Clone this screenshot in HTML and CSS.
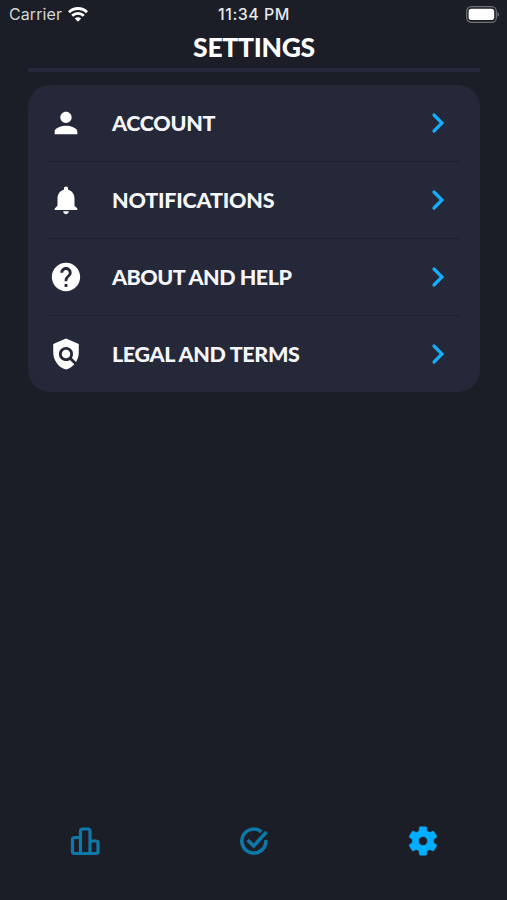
FILE: index.html
```html
<!DOCTYPE html>
<html lang="en">
<head>
    <meta charset="UTF-8">
    <meta name="viewport" content="width=device-width, initial-scale=1.0">
    <title>Settings</title>
    <link rel="stylesheet" href="styles.css">
</head>
<body>
    <div class="screen">
        <!-- Status bar -->
        <div class="status-bar">
            <div class="carrier">
                <span>Carrier</span>
                <svg width="20" height="15" viewBox="0 0 20 15" fill="none" stroke="#fff" stroke-width="2.8">
                    <path d="M1 5.2a12.8 12.8 0 0 1 18 0M4.2 8.8a8.2 8.2 0 0 1 11.6 0"/>
                    <path d="M10 14.8L6.8 11.6a4.5 4.5 0 0 1 6.4 0z" fill="#fff" stroke="none"/>
                </svg>
            </div>
            <div class="clock">11:34 PM</div>
            <div class="battery">
                <svg width="33" height="17" viewBox="0 0 33 17">
                    <rect x=".7" y=".7" width="29.6" height="15.6" rx="4.6" fill="none" stroke="#6f7177" stroke-width="1.2"/>
                    <rect x="2.6" y="2.7" width="25.6" height="11.4" rx="2.8" fill="#fff"/>
                    <path d="M31.5 6v5q1.5-.8 1.5-2.5T31.5 6z" fill="#6f7177"/>
                </svg>
            </div>
        </div>

        <header>
            <h1>SETTINGS</h1>
        </header>

        <main class="card">
            <a class="row">
                <svg class="icon" viewBox="0 0 24 24"><path d="M12 12c2.21 0 4-1.79 4-4s-1.79-4-4-4-4 1.79-4 4 1.79 4 4 4zm0 2c-2.67 0-8 1.34-8 4v2h16v-2c0-2.66-5.33-4-8-4z"/></svg>
                <span class="label account">ACCOUNT</span>
                <svg class="chevron" viewBox="0 0 14 22"><path d="M3 3l8 8-8 8"/></svg>
            </a>
            <a class="row">
                <svg class="icon" viewBox="0 0 24 24"><path d="M12 22c1.1 0 2-.9 2-2h-4c0 1.1.89 2 2 2zm6-6v-5c0-3.07-1.64-5.64-4.5-6.32V4c0-.83-.67-1.5-1.5-1.5s-1.5.67-1.5 1.5v.68C7.63 5.36 6 7.92 6 11v5l-2 2v1h16v-1l-2-2z"/></svg>
                <span class="label notifications">NOTIFICATIONS</span>
                <svg class="chevron" viewBox="0 0 14 22"><path d="M3 3l8 8-8 8"/></svg>
            </a>
            <a class="row">
                <svg class="icon" viewBox="0 0 24 24"><path d="M12 2C6.48 2 2 6.48 2 12s4.48 10 10 10 10-4.48 10-10S17.52 2 12 2zm1 17h-2v-2h2v2zm2.07-7.75l-.9.92C13.45 12.9 13 13.5 13 15h-2v-.5c0-1.1.45-2.1 1.17-2.83l1.24-1.26c.37-.36.59-.86.59-1.41 0-1.1-.9-2-2-2s-2 .9-2 2H8c0-2.21 1.79-4 4-4s4 1.79 4 4c0 .88-.36 1.68-.93 2.25z"/></svg>
                <span class="label about">ABOUT AND HELP</span>
                <svg class="chevron" viewBox="0 0 14 22"><path d="M3 3l8 8-8 8"/></svg>
            </a>
            <a class="row">
                <svg class="icon" viewBox="0 0 24 24"><path d="M21 5l-9-4-9 4v6c0 5.55 3.84 10.74 9 12 2.3-.56 4.33-1.9 5.88-3.71l-3.12-3.12c-1.94 1.29-4.58 1.07-6.29-.64-1.95-1.95-1.95-5.12 0-7.07 1.95-1.95 5.12-1.95 7.07 0 1.71 1.71 1.92 4.35.64 6.29l2.9 2.9C20.29 15.69 21 13.38 21 11V5z"/><circle cx="12" cy="12" r="3"/></svg>
                <span class="label legal">LEGAL AND TERMS</span>
                <svg class="chevron" viewBox="0 0 14 22"><path d="M3 3l8 8-8 8"/></svg>
            </a>
        </main>

        <!-- Bottom tabs -->
        <nav class="tabs">
            <a class="tab">
                <svg viewBox="0 0 34 34" fill="none" stroke="currentColor" stroke-width="3.2" stroke-linejoin="round">
                    <path d="M12.5 12.5h-6q-2 0-2 2v12q0 2 2 2H28q2 0 2-2V18q0-2-2-2h-6M12.5 28.500V6q0-2 2-2H20q2 0 2 2v22.500"/>
                </svg>
            </a>
            <a class="tab">
                <svg viewBox="0 0 34 34" fill="none" stroke="currentColor" stroke-width="3.5">
                    <path d="M24.500 6.800A12 12 0 1 0 28.800 15"/>
                    <path d="M10.500 15l6.200 6L29.500 7"/>
                </svg>
            </a>
            <a class="tab active">
                <svg viewBox="0 0 24 24" fill="currentColor" stroke="currentColor" stroke-width=".4"><path d="M19.5 12c0-.34-.03-.66-.07-.98l2.11-1.65a.5.5 0 0 0 .12-.64l-2-3.46a.5.5 0 0 0-.61-.22l-2.49 1a7.3 7.3 0 0 0-1.69-.98l-.38-2.65A.49.49 0 0 0 14 2h-4a.49.49 0 0 0-.49.42l-.38 2.65c-.61.25-1.17.59-1.69.98l-2.49-1a.5.5 0 0 0-.61.22l-2 3.46a.5.5 0 0 0 .12.64l2.11 1.65a7.9 7.9 0 0 0 0 1.96l-2.11 1.65a.5.5 0 0 0-.12.64l2 3.46c.12.22.39.3.61.22l2.49-1c.52.4 1.08.73 1.69.98l.38 2.65c.03.24.24.42.49.42h4c.25 0 .46-.18.49-.42l.38-2.65c.61-.25 1.17-.59 1.69-.98l2.49 1c.23.09.49 0 .61-.22l2-3.46a.5.5 0 0 0-.12-.64l-2.11-1.65c.04-.32.07-.64.07-.98zM12 15.2a3.2 3.2 0 1 1 0-6.4 3.2 3.2 0 0 1 0 6.4z"/></svg>
            </a>
        </nav>
    </div>
</body>
</html>
```
FILE: styles.css
```css
* {
    box-sizing: border-box;
}
body {
    margin: 0;
    background-color: #1b1e26;
    color: #fff;
    font-family: Lato, sans-serif;
}
.screen {
    display: flex;
    flex-direction: column;
    height: 900px;
    overflow: hidden;
}
/* Status bar */
.status-bar {
    display: grid;
    grid-template-columns: 1fr auto 1fr;
    align-items: center;
    height: 28px;
    padding: 0 8px 0 9px;
    font-family: Inter, sans-serif;
    font-size: 16px;
}
.carrier {
    display: flex;
    align-items: center;
    gap: 6px;
    color: #d4d5d8;
    letter-spacing: 0.1px;
}
.clock {
    color: #e8e8ea;
    font-weight: 500;
    letter-spacing: 0.5px;
}
.battery {
    display: flex;
    justify-content: flex-end;
}
/* Title */
header {
    height: 44px;
    margin: 0 27px 0 28px;
    border-bottom: 4px solid #25283a;
}
h1 {
    margin: 0;
    font-size: 26.5px;
    line-height: 39px;
    font-weight: 900;
    letter-spacing: -0.3px;
    text-align: center;
}
/* Settings list */
.card {
    height: 307px;
    margin: 13px 27px 0 28px;
    padding: 0 20px;
    border-radius: 22px;
    background-color: #252838;
}
.row {
    display: flex;
    align-items: center;
    height: 77px;
    padding: 0 15px 0 1px;
}
/* first row has no border of its own, so it is one pixel shorter */
.row:first-child {
    height: 76px;
}
.row + .row {
    border-top: 1px solid #1d202b;
}
.icon {
    width: 34px;
    height: 34px;
    margin-right: 29px;
    fill: #fff;
}
.label {
    flex: 1;
    font-size: 21.5px;
    font-weight: 900;
    white-space: nowrap;
    color: #f5f6fc;
}
.account {
    letter-spacing: -0.3px;
}
.notifications {
    letter-spacing: -0.2px;
}
.about {
    letter-spacing: -0.5px;
}
.legal {
    letter-spacing: -0.35px;
}
.chevron {
    width: 14px;
    height: 22px;
    fill: none;
    stroke: #16aefb;
    stroke-width: 3.2;
    stroke-linecap: round;
}
/* Bottom tabs */
.tabs {
    display: flex;
    height: 117px;
    margin-top: auto;
}
.tab {
    flex: 1;
    padding-top: 42px;
    text-align: center;
    color: #0c79a9;
}
.tab svg {
    width: 34px;
    height: 34px;
}
.active {
    padding-top: 41px;
    color: #00aeff;
}
```
